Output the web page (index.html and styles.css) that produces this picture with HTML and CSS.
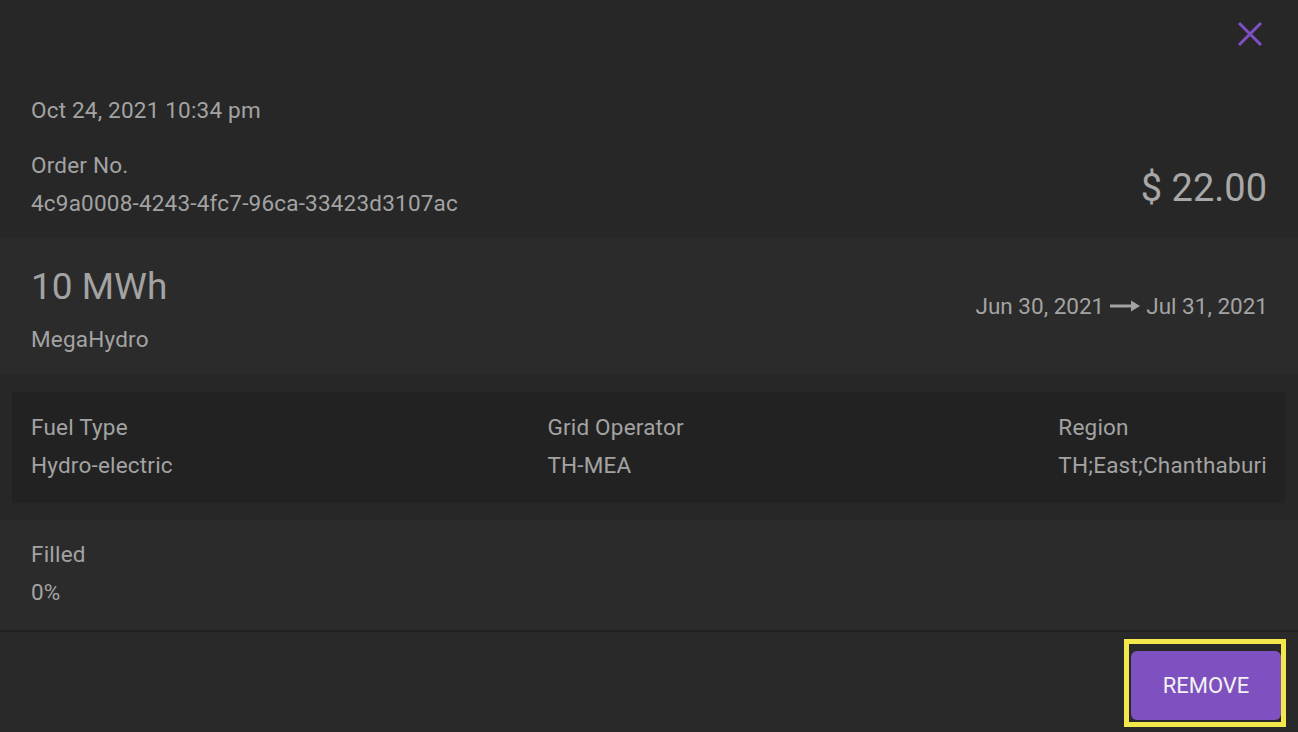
FILE: index.html
```html
<!DOCTYPE html>
<html lang="en">
<head>
<meta charset="utf-8">
<title>Order detail</title>
<link rel="stylesheet" href="styles.css">
</head>
<body>
<div class="modal">
  <section class="summary">
    <div class="close-row">
      <button class="close" aria-label="Close">
        <svg width="26" height="24" viewBox="0 0 26 24"><path d="M2 1 L24 23 M24 1 L2 23" stroke="#7e4fc4" stroke-width="3" fill="none"/></svg>
      </button>
    </div>
    <div class="line">Oct 24, 2021 10:34 pm</div>
    <div class="order-row">
      <div class="order">
        <div class="line">Order No.</div>
        <div class="line">4c9a0008-4243-4fc7-96ca-33423d3107ac</div>
      </div>
      <div class="price">$ 22.00</div>
    </div>
  </section>

  <section class="panel product">
    <div class="product-info">
      <div class="amount">10 MWh</div>
      <div class="line">MegaHydro</div>
    </div>
    <div class="period">
      <span>Jun 30, 2021</span>
      <svg class="arrow" width="30" height="12" viewBox="0 0 30 12"><path d="M0 6 H23" stroke="#a3a3a3" stroke-width="3"/><path d="M21 0.5 L30 6 L21 11.5 Z" fill="#a3a3a3"/></svg>
      <span>Jul 31, 2021</span>
    </div>
  </section>

  <section class="attributes">
    <div class="attr">
      <div class="line">Fuel Type</div>
      <div class="line">Hydro-electric</div>
    </div>
    <div class="attr">
      <div class="line">Grid Operator</div>
      <div class="line">TH-MEA</div>
    </div>
    <div class="attr">
      <div class="line">Region</div>
      <div class="line">TH;East;Chanthaburi</div>
    </div>
  </section>

  <section class="panel filled">
    <div class="line">Filled</div>
    <div class="line">0%</div>
  </section>

  <footer class="actions">
    <div class="highlight">
      <button class="remove">REMOVE</button>
    </div>
  </footer>
</div>
</body>
</html>
```

FILE: styles.css
```css
html, body {
  margin: 0;
  padding: 0;
  background: #272727;
}
body {
  font-family: Roboto, "Liberation Sans", sans-serif;
  color: #a3a3a3;
  font-size: 22.5px;
  letter-spacing: 0.2px;
}
.modal {
  width: 1298px;
  height: 732px;
  display: flex;
  flex-direction: column;
  background: #272727;
  overflow: hidden;
}
.line {
  line-height: 38px;
  height: 38px;
  white-space: nowrap;
}
.summary {
  padding: 22px 31px 16px 31px;
}
.close-row {
  display: flex;
  justify-content: flex-end;
  margin-right: 4px;
  height: 24px;
  margin-bottom: 45px;
}
.close {
  background: none;
  border: 0;
  padding: 0;
  width: 26px;
  height: 24px;
  display: block;
  cursor: pointer;
}
.close svg { display: block; }
.order-row {
  display: flex;
  justify-content: space-between;
  align-items: center;
  margin-top: 17px;
}
.price {
  font-size: 38px;
  line-height: 44px;
  letter-spacing: 0;
  margin-top: 8px;
  color: #a8a8a8;
}
.panel {
  background: #2b2b2b;
}
.product {
  display: flex;
  justify-content: space-between;
  align-items: center;
  padding: 26px 30px 16px 31px;
}
.amount {
  font-size: 37px;
  letter-spacing: 0;
  line-height: 46px;
  height: 46px;
  margin-bottom: 10px;
}
.period {
  display: flex;
  align-items: center;
  gap: 6px;
  white-space: nowrap;
  letter-spacing: 0;
  margin-bottom: 10px;
}
.arrow { display: block; }
.attributes {
  margin: 18px 13px 17px 12px;
  background: #222222;
  padding: 16px 18px 19px 19px;
  display: flex;
  justify-content: space-between;
}
.filled {
  padding: 15px 31px 19px 31px;
  border-bottom: 2px solid #1f1f1f;
}
.actions {
  flex: 1;
  background: #292929;
  display: flex;
  justify-content: flex-end;
  align-items: flex-start;
  padding: 7px 12px 0 0;
}
.highlight {
  border: 5px solid #f3e84b;
  padding: 7px 0 2px 2px;
}
.remove {
  display: block;
  width: 150px;
  height: 69px;
  border: 0;
  border-radius: 6px;
  background: #7f50bf;
  color: #f2f2f2;
  font-family: Roboto, "Liberation Sans", sans-serif;
  font-size: 22px;
  cursor: pointer;
  padding: 0;
}
```
